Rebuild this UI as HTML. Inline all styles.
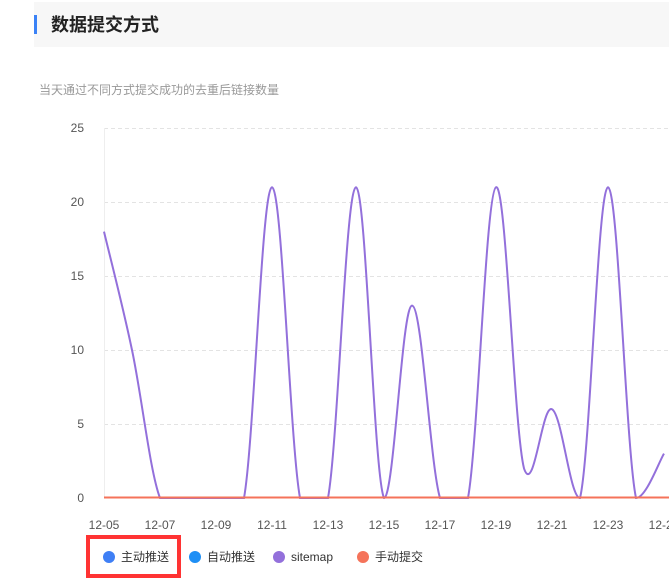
<!DOCTYPE html>
<html><head><meta charset="utf-8"><style>
body{margin:0;width:669px;height:580px;background:#fff;overflow:hidden;font-family:"Liberation Sans","Noto Sans CJK SC",sans-serif;position:relative}
.hd{position:absolute;left:34px;top:2px;width:640px;height:45px;background:#f7f7f7}
.bar{position:absolute;left:34px;top:15px;width:3px;height:19px;background:#3b82f6}
.tt{position:absolute;left:51px;top:13px;font-size:18px;font-weight:bold;color:#222;line-height:24px}
.sub{position:absolute;left:39px;top:81px;font-size:12px;color:#999}
.box{position:absolute;left:86px;top:535px;width:87px;height:35px;border:4px solid #f33}
</style></head><body>
<div class="hd"></div><div class="bar"></div><div class="tt">数据提交方式</div>
<div class="sub">当天通过不同方式提交成功的去重后链接数量</div>
<svg width="669" height="580" style="position:absolute;left:0;top:0">
<g stroke="#e3e3e3" stroke-dasharray="4,3">
<line x1="104" x2="669" y1="128.5" y2="128.5"/><line x1="104" x2="669" y1="202.5" y2="202.5"/><line x1="104" x2="669" y1="276.5" y2="276.5"/><line x1="104" x2="669" y1="350.5" y2="350.5"/><line x1="104" x2="669" y1="424.5" y2="424.5"/>
</g>
<line x1="104.5" x2="104.5" y1="128" y2="498" stroke="#eee"/>
<g font-size="12" fill="#555" text-anchor="end">
<text x="84" y="132">25</text><text x="84" y="206">20</text><text x="84" y="280">15</text><text x="84" y="354">10</text><text x="84" y="428">5</text><text x="84" y="502">0</text>
</g>
<g font-size="12" fill="#555" text-anchor="middle" id="xl"></g>
<path id="p" fill="none" stroke="#9370db" stroke-width="2"/>
<line x1="104" x2="669" y1="497.5" y2="497.5" stroke="#f5735a" stroke-width="2"/>
<g font-size="12" fill="#333">
<circle cx="109" cy="557" r="6" fill="#3f7ff5"/><text x="121" y="561">主动推送</text>
<circle cx="195" cy="557" r="6" fill="#1e8ff5"/><text x="207" y="561">自动推送</text>
<circle cx="279" cy="557" r="6" fill="#9370db"/><text x="291" y="561">sitemap</text>
<circle cx="363" cy="557" r="6" fill="#f5735a"/><text x="375" y="561">手动提交</text>
</g>
</svg>
<div class="box"></div>
<script>
var d=[18,10,0,0,0,0,21,0,0,21,0,13,0,0,21,2,6,0,21,0,3];
var pts=d.map(function(v,i){return [104+28*i,498-v*14.8]});
var s="M"+pts[0][0]+","+pts[0][1];
for(var i=0;i<pts.length-1;i++){var p0=pts[Math.max(0,i-1)],p1=pts[i],p2=pts[i+1],p3=pts[Math.min(pts.length-1,i+2)];
var t=0.18;var c1=[p1[0]+(p2[0]-p0[0])*t,p1[1]+(p2[1]-p0[1])*t],c2=[p2[0]-(p3[0]-p1[0])*t,p2[1]-(p3[1]-p1[1])*t];
if(d[i]==0&&d[i+1]==0){c1[1]=p1[1];c2[1]=p2[1];}
c1[1]=Math.min(c1[1],498);c2[1]=Math.min(c2[1],498);
s+=" C"+c1+" "+c2+" "+p2;}
document.getElementById("p").setAttribute("d",s);
var g=document.getElementById("xl"),h="";
for(var k=0;k<11;k++){var day=5+2*k;h+='<text x="'+(104+56*k)+'" y="529">12-'+(day<10?"0"+day:day)+'</text>';}
g.innerHTML=h;
</script>
</body></html>
